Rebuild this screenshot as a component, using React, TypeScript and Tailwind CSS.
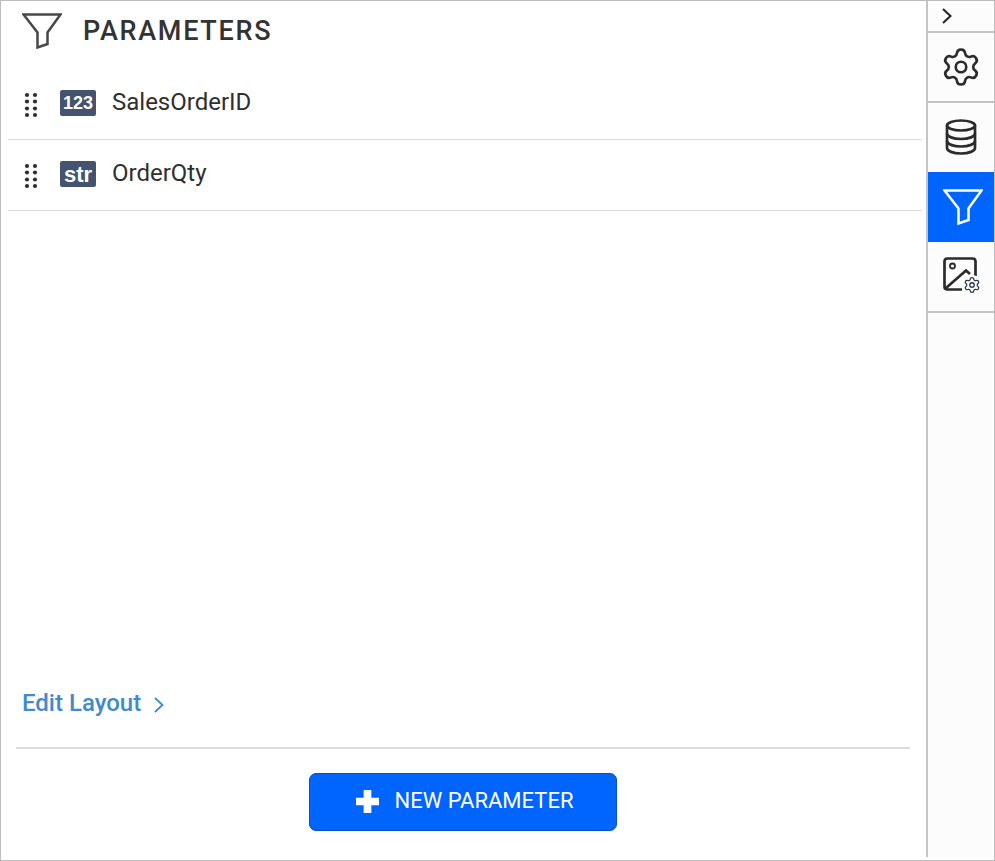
import { FC } from "react";
import { Settings } from "lucide-react";

const FunnelIcon: FC<{ className?: string }> = ({ className }) => (
  <svg viewBox="0 0 40 36" fill="none" className={className}>
    <path
      d="M1.500 1.500H38.500L25.500 19.500V31L15.500 34.500V19.500L1.500 1.500Z"
      stroke="currentColor"
      strokeWidth="2.500"
    />
  </svg>
);

const Chevron: FC<{ className?: string; strokeWidth: number }> = ({ className, strokeWidth }) => (
  <svg viewBox="0 0 10 16" fill="none" stroke="currentColor" strokeWidth={strokeWidth} className={className}>
    <path d="M1 1L8.500 8L1 15" />
  </svg>
);

const GripIcon: FC = () => (
  <svg width="14" height="26" viewBox="0 0 14 26" fill="#2f2f2f" className="mt-[5px] ml-[1px]">
    {[3, 9.5, 16.5, 23].map((y) => (
      <g key={y}>
        <circle cx="3" cy={y} r="2.100" />
        <circle cx="11" cy={y} r="2.100" />
      </g>
    ))}
  </svg>
);

const DatabaseIcon: FC = () => (
  <svg width="32" height="36" viewBox="0 0 32 36" fill="none" stroke="#2b2b2b" strokeWidth="2.700">
    <ellipse cx="16" cy="6.500" rx="14" ry="5" />
    <path d="M2 6.500V29C2 32 8 34.500 16 34.500S30 32 30 29V6.500" />
    <path d="M2 14.500C2 17.500 8 20 16 20S30 17.500 30 14.500" />
    <path d="M2 22C2 25 8 27.500 16 27.500S30 25 30 22" />
  </svg>
);

const ImageSettingsIcon: FC = () => (
  <div className="relative mb-[4px] h-[36px] w-[36px]">
    <svg width="36" height="36" viewBox="0 0 36 36" fill="none" stroke="#2b2b2b">
      <path
        d="M19 32.500H4.500C2.600 32.500 1.500 31.400 1.500 29.500V4.500C1.500 2.600 2.600 1.500 4.500 1.500H29.500C31.400 1.500 32.500 2.600 32.500 4.500V19"
        strokeWidth="2.700"
      />
      <path d="M3 31L23 13.500L27 17" strokeWidth="2.700" />
      <circle cx="9.500" cy="9" r="2.500" strokeWidth="1.800" />
    </svg>
    <div className="absolute right-[-3px] bottom-[-2px] rounded-full bg-[#fcfcfc] p-[1px] text-[#2b3a4a]">
      <Settings className="h-[18px] w-[18px]" strokeWidth={1.700} />
    </div>
  </div>
);

const App: FC = () => {
  const params = [
    { name: "SalesOrderID", type: "123", typeSize: "text-[18px]" },
    { name: "OrderQty", type: "str", typeSize: "text-[22px]" },
  ];

  return (
    <div
      className="flex h-[861px] w-[995px] border border-[#bcbcbc] bg-white text-[#2f2f2f]"
      style={{ fontFamily: "Roboto, sans-serif" }}
    >
      <div className="flex min-w-0 flex-1 flex-col">
        <div className="flex h-[68px] items-start pt-[12px] pl-[21px]">
          <FunnelIcon className="h-[36px] w-[40px] text-[#474747]" />
          <h1 className="mt-[3px] ml-[21px] text-[27px] leading-[30px] font-medium tracking-[1.700px] text-[#333]">
            PARAMETERS
          </h1>
        </div>

        <div className="mr-[4px] ml-[7px] flex flex-col">
          {params.map(({ name, type, typeSize }) => (
            <div key={name} className="flex h-[71px] items-center border-b border-[#dcdcdc] pb-[3px] pl-[15px]">
              <GripIcon />
              <div
                className={`mt-[1px] ml-[22px] flex h-[26px] w-[36px] items-center justify-center rounded-[2px] bg-[#44536e] font-bold text-white ${typeSize}`}
                style={{ fontFamily: "'Liberation Sans', sans-serif" }}
              >
                {type}
              </div>
              <span className="mb-[2px] ml-[16px] text-[24px] leading-[28px]">{name}</span>
            </div>
          ))}
        </div>

        <div className="mt-auto flex items-center pl-[21px] text-[#3f8bcb]">
          <span className="text-[24px] leading-[28px] font-medium">Edit Layout</span>
          <Chevron className="mt-[3px] ml-[13px] h-[16px] w-[10px]" strokeWidth={1.800} />
        </div>

        <div className="mt-[30px] mr-[16px] ml-[15px] flex justify-center border-t-2 border-[#dcdcdc] pt-[24px] pb-[29px]">
          <button className="mr-[1px] flex h-[58px] w-[308px] items-center justify-center rounded-[7px] border border-[#0052cc] bg-[#0064ff] pb-[2px] pl-[4px] text-white">
            <svg width="23" height="23" viewBox="0 0 24 24" fill="white" className="mr-[16px]">
              <path d="M8 0h8v8h8v8h-8v8H8v-8H0V8h8z" />
            </svg>
            <span className="text-[22px] leading-[28px]">NEW PARAMETER</span>
          </button>
        </div>
      </div>

      <div className="mb-[3px] flex w-[68px] flex-col border-l-2 border-[#c4c4c4] bg-[#fcfcfc]">
        <div className="flex h-[32px] items-center border-b-2 border-[#c4c4c4] pl-[14px] text-[#222]">
          <Chevron className="h-[16px] w-[10px]" strokeWidth={2} />
        </div>
        <div className="flex h-[70px] items-center justify-center border-b-2 border-[#c4c4c4] text-[#2b2b2b]">
          <Settings className="h-[42px] w-[42px]" strokeWidth={1.500} />
        </div>
        <div className="flex h-[69px] items-center justify-center pb-[2px]">
          <DatabaseIcon />
        </div>
        <div className="flex h-[70px] items-center justify-center bg-[#0064ff] pl-[3px] text-white">
          <FunnelIcon className="h-[36px] w-[40px]" />
        </div>
        <div className="flex h-[71px] items-center justify-center border-b-2 border-[#c4c4c4]">
          <ImageSettingsIcon />
        </div>
      </div>
    </div>
  );
};

export default App;
